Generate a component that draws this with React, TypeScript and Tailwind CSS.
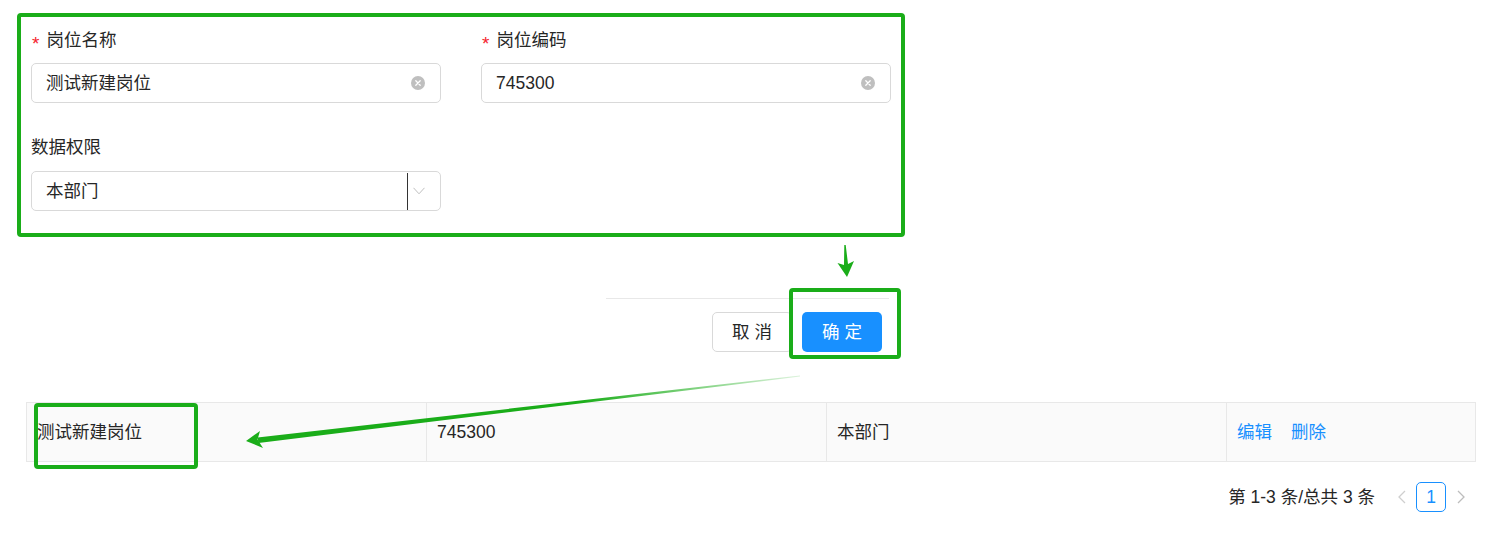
import React from 'react';

const GREEN = '#1aad19';

function ClearIcon() {
  return (
    <svg width="14" height="14" viewBox="0 0 14 14" className="shrink-0">
      <circle cx="7" cy="7" r="7" fill="#bfbfbf" />
      <path d="M4.8 4.8 L9.2 9.2 M9.2 4.8 L4.8 9.2" stroke="#fff" strokeWidth="1.3" strokeLinecap="round" />
    </svg>
  );
}

function Label({ text, required }: { text: string; required?: boolean }) {
  return (
    <div className="h-6 flex items-center text-[17.5px] leading-6 text-[#262626]">
      {required && <span className="ml-px mr-[7px] text-[#f5222d] text-[19px] leading-none translate-y-[3px]">*</span>}
      {text}
    </div>
  );
}

function TextInput({ value }: { value: string }) {
  return (
    <div className="mt-[11px] h-10 w-[410px] border border-[#d9d9d9] rounded-[5px] bg-white pl-[14px] pr-[15px] flex items-center justify-between">
      <span className="text-[17.5px] text-[#262626]">{value}</span>
      <ClearIcon />
    </div>
  );
}

function SelectInput({ value }: { value: string }) {
  return (
    <div className="mt-3 h-10 w-[410px] border border-[#d9d9d9] rounded-[5px] bg-white pl-[14px] flex items-center justify-between">
      <span className="text-[17.5px] text-[#262626]">{value}</span>
      <div className="flex items-center h-full">
        <div className="w-px h-[37px] bg-[#333]" />
        <svg width="12" height="8" viewBox="0 0 12 8" className="ml-[5px] mr-[15px]">
          <path d="M0.5 0.8 L6 6.8 L11.5 0.8" fill="none" stroke="#bfbfbf" strokeWidth="1" />
        </svg>
      </div>
    </div>
  );
}

export default function App() {
  return (
    <div
      className="relative w-[1487px] h-[537px] bg-white overflow-hidden"
      style={{ fontFamily: '"Liberation Sans", "Noto Sans CJK SC", sans-serif' }}
    >
      {/* form */}
      <div className="ml-[17px] mt-[13px] w-[888px] h-[224px] border-4 border-[#1aad19] rounded-[4px] px-[10px] pt-[11px]">
        <div className="grid grid-cols-[410px_410px] gap-x-10">
          <div>
            <Label text="岗位名称" required />
            <TextInput value="测试新建岗位" />
          </div>
          <div>
            <Label text="岗位编码" required />
            <TextInput value="745300" />
          </div>
          <div className="mt-8">
            <Label text="数据权限" />
            <SelectInput value="本部门" />
          </div>
        </div>
      </div>

      {/* footer */}
      <div className="ml-[606px] mt-[61px] w-[283px] border-t border-[#e8e8e8] pt-[13px] pr-[7px] flex justify-end gap-[10px]">
        <button className="w-20 h-10 border border-[#d9d9d9] rounded-[5px] bg-white text-[17.5px] text-[#262626]">
          取 消
        </button>
        <button className="w-20 h-10 rounded-[5px] bg-[#1890ff] text-[17.5px] text-white">
          确 定
        </button>
      </div>

      {/* table */}
      <div className="ml-[26px] mt-[50px] w-[1450px] h-[60px] grid grid-cols-[400px_400px_400px_250px] border border-[#e8e8e8] bg-[#fafafa] text-[17.5px] text-[#262626]">
        <div className="flex items-center pl-[10px] border-r border-[#e8e8e8]">测试新建岗位</div>
        <div className="flex items-center pl-[10px] border-r border-[#e8e8e8]">745300</div>
        <div className="flex items-center pl-[10px] border-r border-[#e8e8e8]">本部门</div>
        <div className="flex items-center pl-[10px] gap-[19px] text-[#1890ff]">
          <span>编辑</span>
          <span>删除</span>
        </div>
      </div>

      {/* pagination */}
      <div className="ml-[26px] mt-5 w-[1450px] h-[30px] flex justify-end items-center text-[17.5px] text-[#262626]">
        <span className="mr-[11px]">第 1-3 条/总共 3 条</span>
        <div className="w-[30px] h-[30px] flex items-center justify-center">
          <svg width="9" height="14" viewBox="0 0 9 14">
            <path d="M8 1 L2 7 L8 13" fill="none" stroke="#cfcfcf" strokeWidth="1.3" />
          </svg>
        </div>
        <div className="w-[30px] h-[30px] border border-[#1890ff] rounded-[5px] flex items-center justify-center text-[#1890ff] font-medium">
          1
        </div>
        <div className="w-[30px] h-[30px] flex items-center justify-center">
          <svg width="9" height="14" viewBox="0 0 9 14">
            <path d="M1 1 L7 7 L1 13" fill="none" stroke="#bdbdbd" strokeWidth="1.3" />
          </svg>
        </div>
      </div>

      {/* annotations */}
      <div className="absolute left-[789px] top-[288px] w-[112px] h-[71px] border-4 border-[#1aad19] rounded-[4px]" />
      <div className="absolute left-[34px] top-[403px] w-[164px] h-[66px] border-4 border-[#1aad19] rounded-[4px]" />
      <svg className="absolute inset-0 pointer-events-none" width="1487" height="537">
        <defs>
          <linearGradient id="fade" gradientUnits="userSpaceOnUse" x1="800" y1="376" x2="580" y2="402">
            <stop offset="0" stopColor={GREEN} stopOpacity="0.15" />
            <stop offset="1" stopColor={GREEN} stopOpacity="1" />
          </linearGradient>
        </defs>
        <polygon points="800,375.5 800,376.5 258.5,443 257.5,437.5" fill="url(#fade)" />
        <polygon points="246,441 260,431 257.5,439.5 263,448" fill={GREEN} />
        <polygon points="844.3,245 845.7,245 848,264 854,261 847,277 837.5,263 844,265" fill={GREEN} />
      </svg>
    </div>
  );
}
